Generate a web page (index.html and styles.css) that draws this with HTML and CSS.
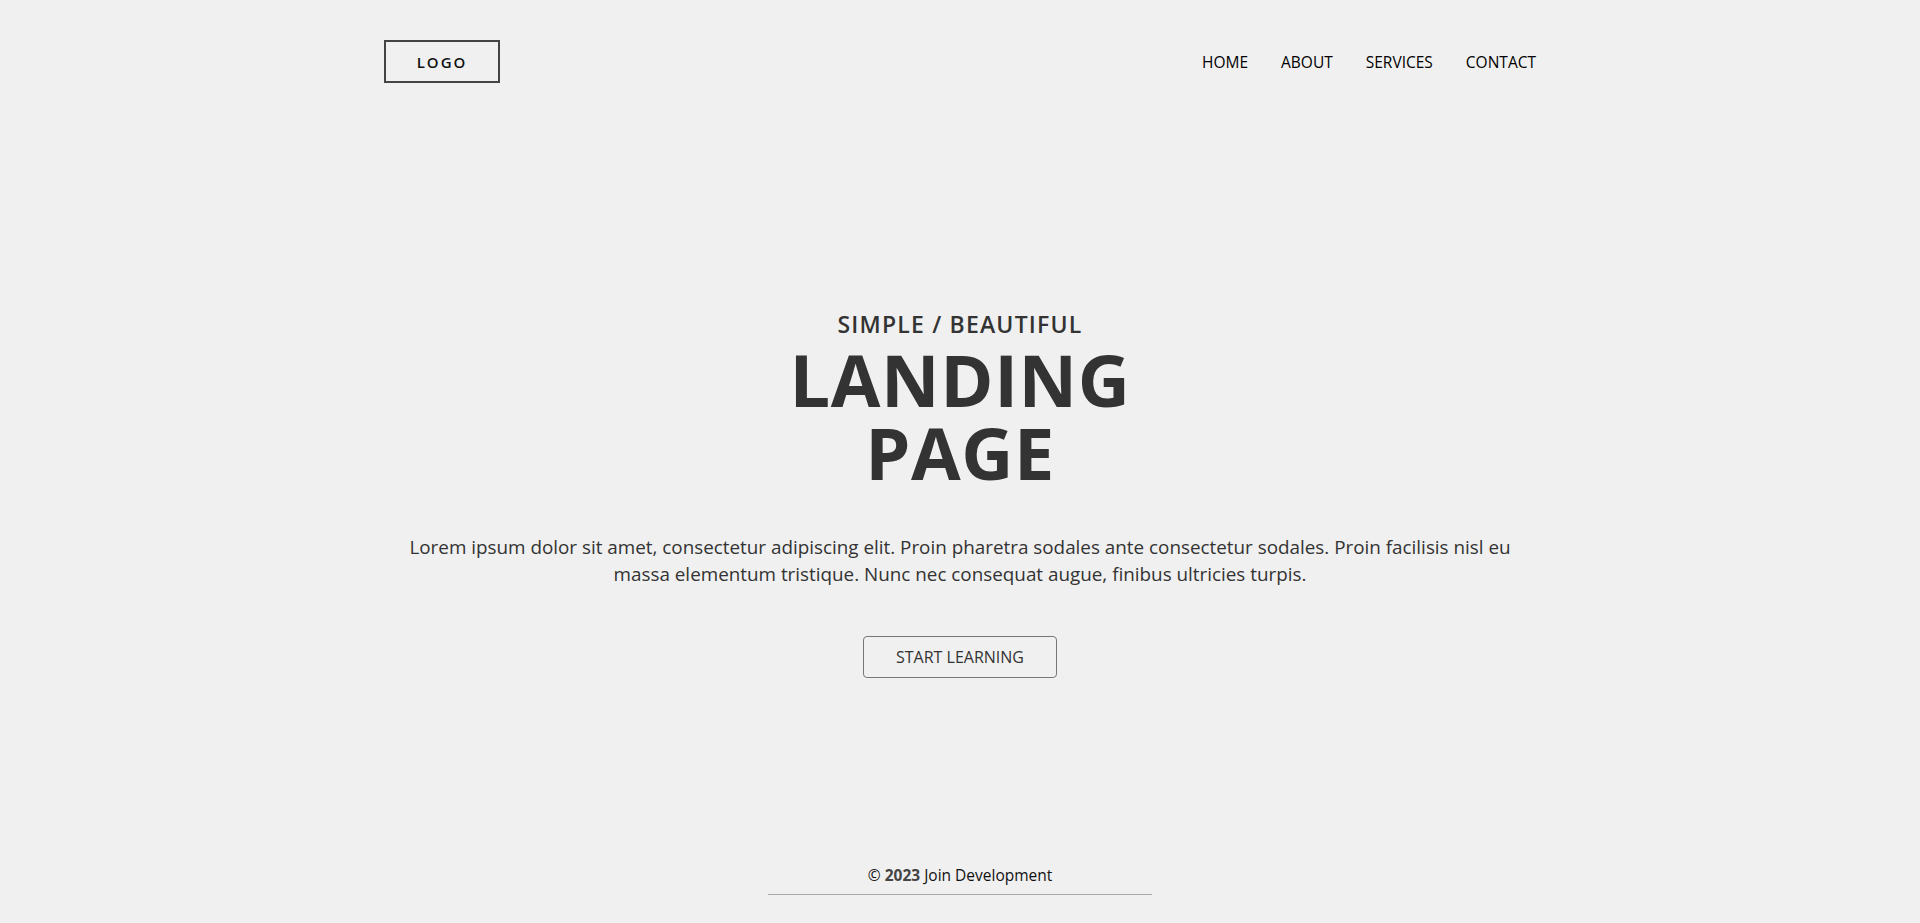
FILE: index.html
```html
<!DOCTYPE html>
<html lang="en">
<head>
<meta charset="utf-8">
<title>Landing Page</title>
<link rel="stylesheet" href="styles.css">
</head>
<body>
<div class="page">
  <header class="header">
    <div class="logo">LOGO</div>
    <nav class="nav">
      <a href="#">HOME</a>
      <a href="#">ABOUT</a>
      <a href="#">SERVICES</a>
      <a href="#">CONTACT</a>
    </nav>
  </header>
  <main class="hero">
    <h3 class="eyebrow">SIMPLE / BEAUTIFUL</h3>
    <h1 class="title">LANDING<br>PAGE</h1>
    <p class="lead">Lorem ipsum dolor sit amet, consectetur adipiscing elit. Proin pharetra sodales ante consectetur sodales. Proin facilisis nisl eu massa elementum tristique. Nunc nec consequat augue, finibus ultricies turpis.</p>
    <a class="btn" href="#">START LEARNING</a>
  </main>
  <footer class="footer">
    <p class="copy">&copy; <b>2023</b> <span>Join Development</span></p>
  </footer>
</div>
</body>
</html>
```
FILE: styles.css
```css
* { box-sizing: border-box; }
html, body { margin: 0; padding: 0; }
body {
  background: #f0f0f0;
  font-family: "Open Sans", "Noto Sans", sans-serif;
  color: #333;
}
.page {
  min-height: 100vh;
  display: flex;
  flex-direction: column;
}
.header {
  width: 60%;
  margin: 0 auto;
  padding-top: 40px;
  display: flex;
  justify-content: space-between;
  align-items: center;
}
.logo {
  width: 116px;
  height: 43px;
  border: 2px solid #444;
  display: flex;
  align-items: center;
  justify-content: center;
  font-size: 15px;
  font-weight: 600;
  letter-spacing: 2px;
  color: #111;
}
.nav {
  display: flex;
  gap: 33px;
}
.nav a {
  color: #000;
  text-decoration: none;
  font-size: 15.5px;
  font-weight: 500;
}
.hero {
  flex: 1;
  width: 60%;
  margin: 0 auto;
  padding-top: 39px;
  display: flex;
  flex-direction: column;
  align-items: center;
  justify-content: center;
  text-align: center;
}
.eyebrow {
  margin: 0;
  font-size: 23px;
  font-weight: 600;
  letter-spacing: 1.2px;
  line-height: 30px;
  color: #333;
}
.title {
  margin: 4px 0 0;
  font-size: 72px;
  line-height: 73px;
  font-weight: 700;
  color: #333;
  letter-spacing: 0.6px;
}
.lead {
  margin: 45px 0 0;
  max-width: 1120px;
  font-size: 18.85px;
  line-height: 27px;
  color: #333;
}
.btn {
  margin-top: 48px;
  width: 194px;
  height: 42px;
  border: 1px solid #777;
  border-radius: 4px;
  display: flex;
  align-items: center;
  justify-content: center;
  color: #333;
  text-decoration: none;
  font-size: 16px;
}
.footer {
  width: 20%;
  margin: 0 auto;
  border-bottom: 1px solid #aaa;
  margin-bottom: 28px;
}
.copy {
  margin: 0 0 8px;
  text-align: center;
  font-size: 15.5px;
  line-height: 22px;
  color: #111;
}
.copy b { color: #444; }
```
